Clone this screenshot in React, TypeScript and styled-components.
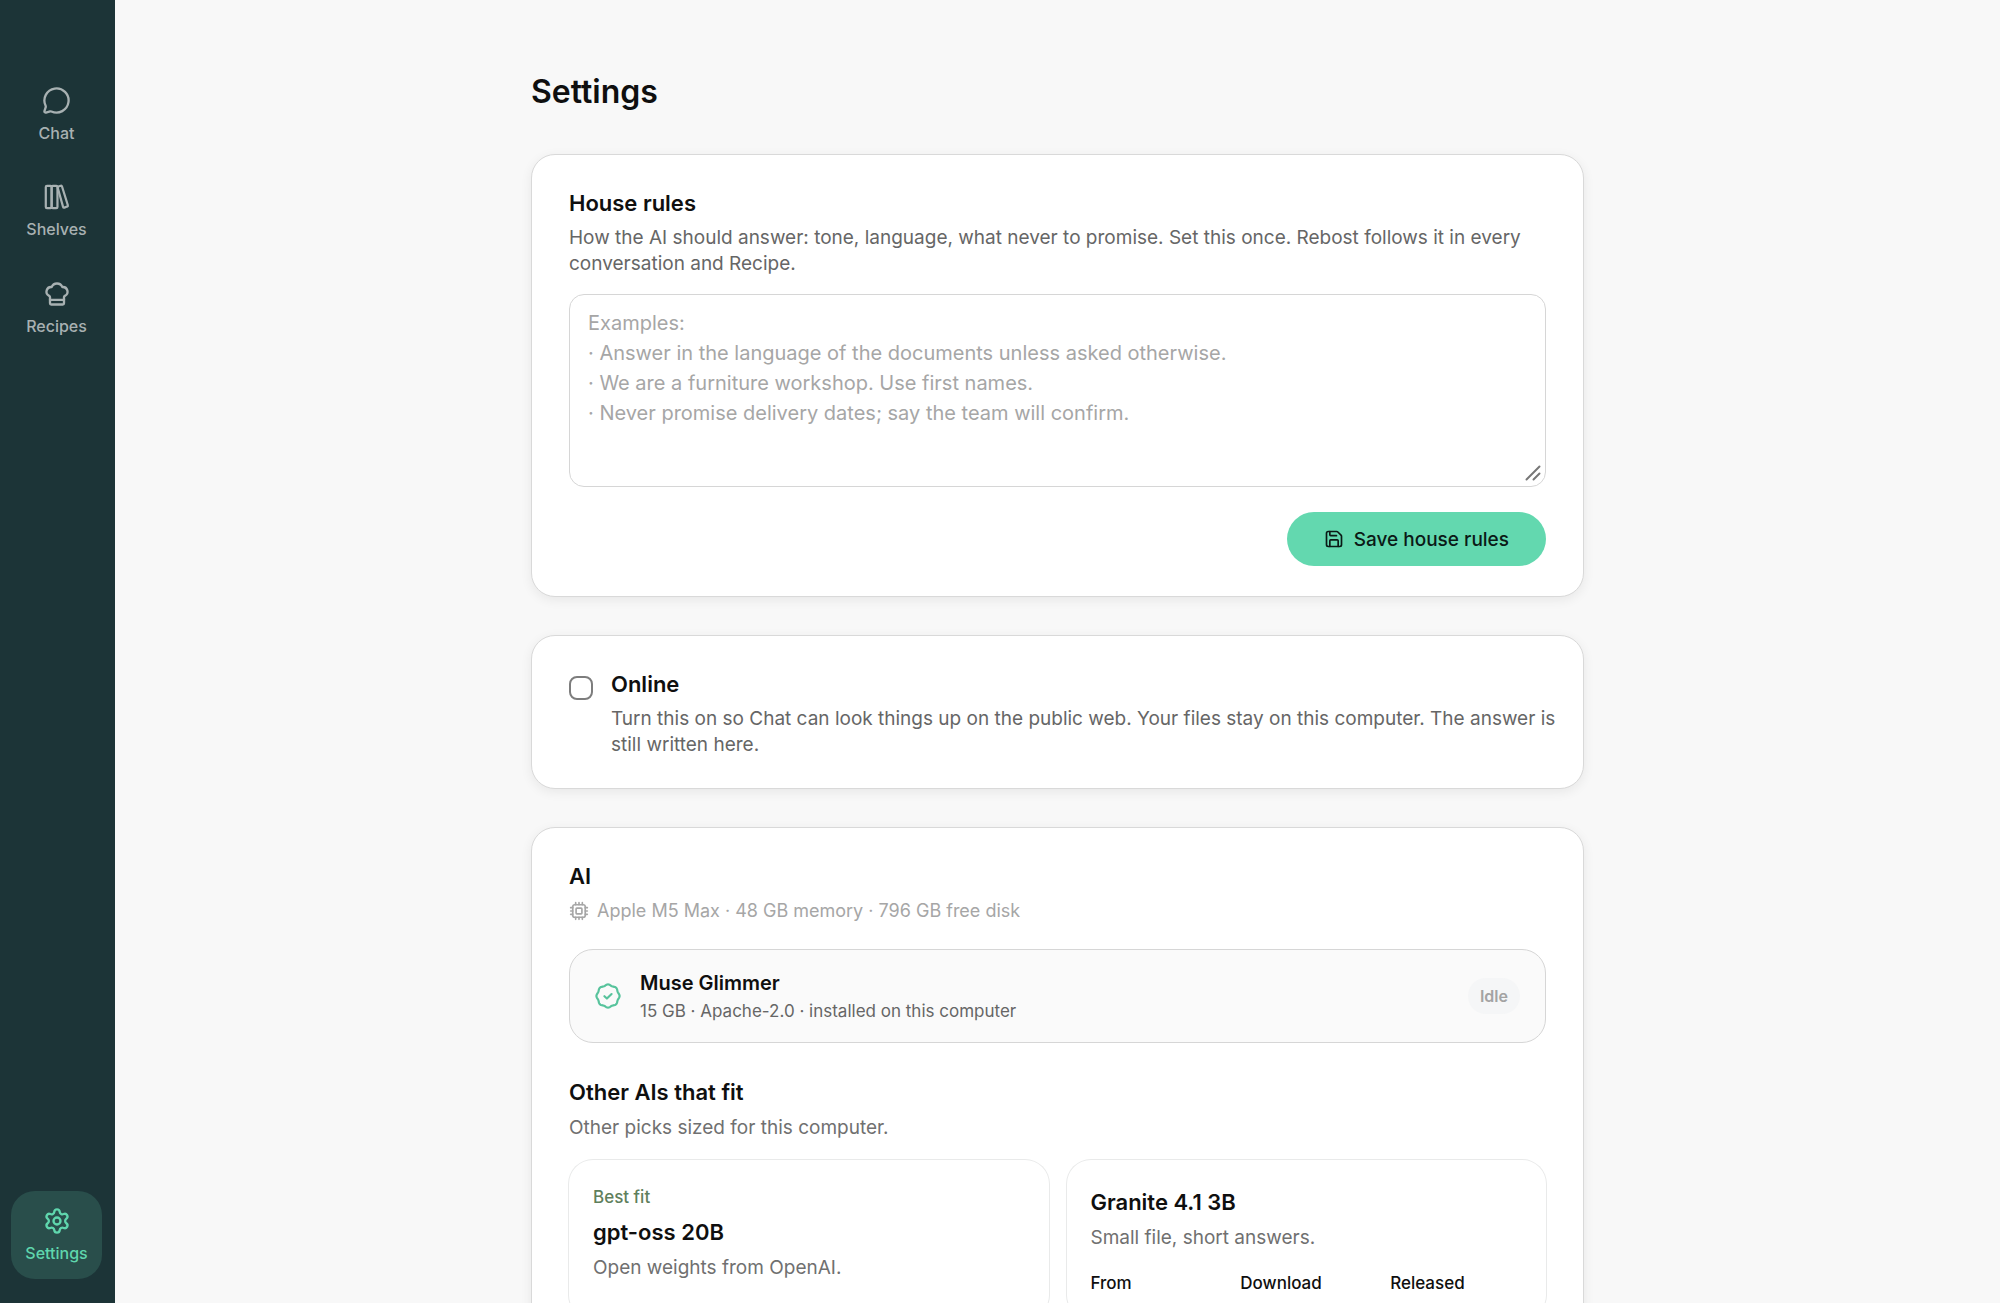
import React, { useState } from "react";
import styled, { createGlobalStyle } from "styled-components";
import { ChefHat, MessageCircle, Save } from "lucide-react";

const Global = createGlobalStyle`
  *, *::before, *::after { box-sizing: border-box; }
  body {
    margin: 0;
    background: #f8f8f8;
    color: #0f0f0f;
    font-family: Inter, "Liberation Sans", sans-serif;
    -webkit-font-smoothing: antialiased;
  }
  h1, h2, h3, p, dl, dt, dd { margin: 0; }
  button, textarea { font-family: inherit; }
`;

const Shell = styled.div`
  display: flex;
  height: 100vh;
`;

const Sidebar = styled.nav`
  display: flex;
  flex-direction: column;
  gap: 9px;
  flex: 0 0 115px;
  padding: 70px 13px 24px 11px;
  background: #1c3437;
`;

const NavButton = styled.button<{ $active?: boolean }>`
  display: flex;
  flex-direction: column;
  align-items: center;
  justify-content: center;
  gap: 8px;
  height: 88px;
  margin-top: ${(p) => (p.$active ? "auto" : "0")};
  padding: 0;
  border: 0;
  border-radius: 24px;
  background: ${(p) => (p.$active ? "#294e4b" : "transparent")};
  color: ${(p) => (p.$active ? "#5fd6ad" : "#a8b1b2")};
  font-size: 16px;
  line-height: 20px;
  font-weight: 500;
  cursor: pointer;
`;

const Scroller = styled.main`
  flex: 1;
  min-width: 0;
  overflow-y: auto;
  scrollbar-width: none;
  padding: 70px 40px;
`;

const Column = styled.div`
  display: flex;
  flex-direction: column;
  gap: 38px;
  max-width: 1053px;
  margin: 0 auto;
`;

const PageTitle = styled.h1`
  margin-bottom: 2px;
  font-size: 32px;
  line-height: 44px;
  font-weight: 600;
`;

const Card = styled.section`
  padding: 30px 37px;
  border: 1px solid #d9d9d9;
  border-radius: 24px;
  background: #fff;
  box-shadow: 0 3px 12px rgba(0, 0, 0, 0.07);
`;

const ToggleCard = styled(Card)`
  padding-right: 24px;
`;

const Heading = styled.h2`
  display: block;
  font-size: 22px;
  line-height: 36px;
  font-weight: 600;
`;

const Description = styled.p`
  margin-top: 4px;
  color: #666;
  font-size: 19px;
  line-height: 26px;
`;

const RulesField = styled.div`
  position: relative;
  display: flex;
  margin-top: 17px;
`;

const RulesInput = styled.textarea`
  flex: 1;
  height: 193px;
  padding: 13px 18px;
  border: 1px solid #d6d6d6;
  border-radius: 15px;
  background: #fff;
  color: #0f0f0f;
  font-size: 20px;
  line-height: 30px;
  resize: none;
  &::placeholder { color: #a6a6a6; opacity: 1; }
`;

const Grip = styled.svg`
  position: absolute;
  right: 5px;
  bottom: 6px;
  pointer-events: none;
`;

const Actions = styled.div`
  display: flex;
  justify-content: flex-end;
  margin-top: 25px;
`;

const PrimaryButton = styled.button`
  display: flex;
  align-items: center;
  gap: 10px;
  height: 54px;
  padding: 0 37px;
  border: 0;
  border-radius: 27px;
  background: #63d8af;
  color: #0b1a16;
  font-size: 19px;
  font-weight: 500;
  cursor: pointer;
`;

const ToggleRow = styled.label`
  display: flex;
  gap: 18px;
  cursor: pointer;
`;

const Checkbox = styled.input`
  appearance: none;
  flex: 0 0 24px;
  height: 24px;
  margin: 10px 0 0;
  border: 2px solid #7d7d7d;
  border-radius: 8px;
  background: #fff;
  &:checked { background: #63d8af; border-color: #63d8af; }
`;

const Hardware = styled.p`
  display: flex;
  align-items: center;
  gap: 8px;
  margin-top: 4px;
  color: #a6a6a6;
  font-size: 18px;
  line-height: 26px;
`;

const Installed = styled.div`
  display: flex;
  align-items: center;
  gap: 19px;
  margin-top: 25px;
  padding: 18px 25px;
  border: 1px solid #d6d6d6;
  border-radius: 24px;
  background: #fafafa;
`;

const InstalledText = styled.div`
  flex: 1;
`;

const InstalledName = styled.h3`
  font-size: 20px;
  line-height: 30px;
  font-weight: 600;
`;

const InstalledMeta = styled.p`
  color: #666;
  font-size: 17px;
  line-height: 26px;
`;

const Badge = styled.span`
  padding: 7px 12px;
  border-radius: 18px;
  background: #f5f6f7;
  color: #a3a3a3;
  font-size: 16px;
  line-height: 22px;
  font-weight: 600;
`;

const SubHead = styled.div`
  margin-top: 31px;
`;

const Muted = styled.p`
  color: #707070;
  font-size: 19px;
  line-height: 36px;
`;

const Models = styled.div`
  display: grid;
  grid-template-columns: repeat(2, 1fr);
  gap: 18px;
  margin-top: 14px;
`;

const ModelCard = styled.article`
  padding: 24px;
  border-radius: 24px;
  box-shadow: 0 0 0 1px #e9eaea;
`;

const Tag = styled.p`
  margin-bottom: 4px;
  color: #5f7f5c;
  font-size: 17px;
  line-height: 26px;
  font-weight: 500;
`;

const Facts = styled.dl`
  display: grid;
  grid-template-columns: repeat(3, 1fr);
  gap: 18px;
  margin-top: 15px;
  font-size: 17px;
  line-height: 24px;
  dt { font-weight: 500; }
`;

const PLACEHOLDER = [
  "Examples:",
  "· Answer in the language of the documents unless asked otherwise.",
  "· We are a furniture workshop. Use first names.",
  "· Never promise delivery dates; say the team will confirm.",
].join("\n");

const lineIcon = {
  viewBox: "0 0 24 24",
  fill: "none",
  stroke: "currentColor",
  strokeLinecap: "round",
  strokeLinejoin: "round",
  "aria-hidden": true,
} as const;

const BooksIcon = () => (
  <svg {...lineIcon} width="28" height="28" strokeWidth="1.9">
    <rect x="2.4" y="2.5" width="5" height="19" rx="1" />
    <rect x="7.4" y="2.5" width="5" height="19" rx="1" />
    <path d="M12.600 4.100a.9.9 0 0 1 .6-1.100l2-.6a.9.9 0 0 1 1.100.6l5 16.100a.9.9 0 0 1-.6 1.100l-2.400.9a.9.9 0 0 1-1.100-.6z" />
  </svg>
);

const GearIcon = () => (
  <svg {...lineIcon} width="28" height="28" strokeWidth="2">
    <path d="M9.671 4.136a2.340 2.340 0 0 1 4.659 0 2.340 2.340 0 0 0 3.319 1.915 2.340 2.340 0 0 1 2.330 4.033 2.340 2.340 0 0 0 0 3.831 2.340 2.340 0 0 1-2.330 4.033 2.340 2.340 0 0 0-3.319 1.915 2.340 2.340 0 0 1-4.659 0 2.340 2.340 0 0 0-3.320-1.915 2.340 2.340 0 0 1-2.330-4.033 2.340 2.340 0 0 0 0-3.831A2.340 2.340 0 0 1 6.350 6.051a2.340 2.340 0 0 0 3.319-1.915" />
    <circle cx="12" cy="12" r="3" />
  </svg>
);

const ChipIcon = () => (
  <svg {...lineIcon} width="20" height="20" strokeWidth="2">
    <rect x="4.500" y="4.500" width="15" height="15" rx="2.500" />
    <rect x="8.500" y="8.500" width="7" height="7" rx="1" />
    <path d="M8 4.500V2M12 4.500V2M16 4.500V2M8 22v-2.500M12 22v-2.500M16 22v-2.500M4.500 8H2M4.500 12H2M4.500 16H2M22 8h-2.500M22 12h-2.500M22 16h-2.500" />
  </svg>
);

const scallop = (() => {
  const steps = 96;
  let d = "";
  for (let i = 0; i < steps; i++) {
    const a = (i / steps) * Math.PI * 2;
    const r = 10.2 + 0.5 * Math.cos(a * 8);
    d += `${i ? "L" : "M"}${(12 + r * Math.cos(a)).toFixed(2)} ${(12 + r * Math.sin(a)).toFixed(2)}`;
  }
  return d + "Z";
})();

const VerifiedIcon = () => (
  <svg {...lineIcon} width="26" height="26" strokeWidth="2" color="#57c39c">
    <path d={scallop} />
    <path d="m8.700 12.200 2.300 2.100 4.300-4.100" />
  </svg>
);

export default function App() {
  const [rules, setRules] = useState("");
  const [online, setOnline] = useState(false);
  return (
    <>
      <Global />
      <Shell>
        <Sidebar aria-label="Main">
          <NavButton><MessageCircle size={29} strokeWidth={1.9} />Chat</NavButton>
          <NavButton><BooksIcon />Shelves</NavButton>
          <NavButton><ChefHat size={28} strokeWidth={2} />Recipes</NavButton>
          <NavButton $active aria-current="page"><GearIcon />Settings</NavButton>
        </Sidebar>
        <Scroller>
          <Column>
            <PageTitle>Settings</PageTitle>
            <Card>
              <Heading as="label" htmlFor="rules">House rules</Heading>
              <Description>
                How the AI should answer: tone, language, what never to promise. Set this once. Rebost follows it in every conversation and Recipe.
              </Description>
              <RulesField>
                <RulesInput id="rules" placeholder={PLACEHOLDER} value={rules} onChange={(e) => setRules(e.target.value)} />
                <Grip width="16" height="16" viewBox="0 0 16 16" fill="none" stroke="#777" strokeWidth="2" strokeLinecap="round"><path d="M1.500 14.500 14.500 1.500M8.500 14.500l6-6" /></Grip>
              </RulesField>
              <Actions>
                <PrimaryButton><Save size={20} />Save house rules</PrimaryButton>
              </Actions>
            </Card>
            <ToggleCard>
              <ToggleRow>
                <Checkbox type="checkbox" checked={online} onChange={(e) => setOnline(e.target.checked)} />
                <div>
                  <Heading>Online</Heading>
                  <Description>
                    Turn this on so Chat can look things up on the public web. Your files stay on this computer. The answer is still written here.
                  </Description>
                </div>
              </ToggleRow>
            </ToggleCard>
            <Card>
              <Heading>AI</Heading>
              <Hardware><ChipIcon />Apple M5 Max · 48 GB memory · 796 GB free disk</Hardware>
              <Installed>
                <VerifiedIcon />
                <InstalledText>
                  <InstalledName>Muse Glimmer</InstalledName>
                  <InstalledMeta>15 GB · Apache-2.0 · installed on this computer</InstalledMeta>
                </InstalledText>
                <Badge>Idle</Badge>
              </Installed>
              <SubHead>
                <Heading>Other AIs that fit</Heading>
                <Muted>Other picks sized for this computer.</Muted>
              </SubHead>
              <Models>
                <ModelCard>
                  <Tag>Best fit</Tag>
                  <Heading as="h3">gpt-oss 20B</Heading>
                  <Muted>Open weights from OpenAI.</Muted>
                </ModelCard>
                <ModelCard>
                  <Heading as="h3">Granite 4.1 3B</Heading>
                  <Muted>Small file, short answers.</Muted>
                  <Facts><dt>From</dt><dt>Download</dt><dt>Released</dt></Facts>
                </ModelCard>
              </Models>
            </Card>
          </Column>
        </Scroller>
      </Shell>
    </>
  );
}
